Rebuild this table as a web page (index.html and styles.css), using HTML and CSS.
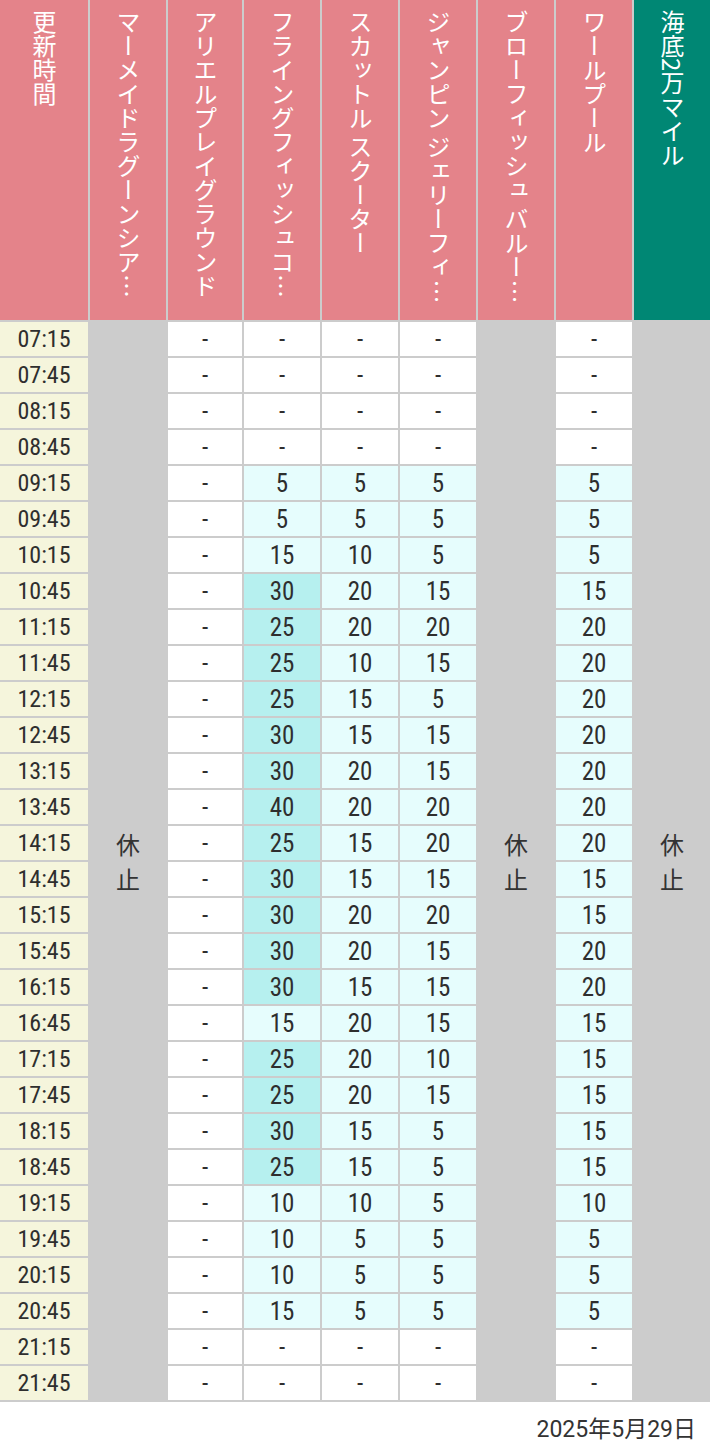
FILE: index.html
```html
<!DOCTYPE html>
<html lang="ja">
<head>
<meta charset="utf-8">
<link rel="stylesheet" href="styles.css">
</head>
<body>
<div class="board" id="board">
  <div class="hd"><span class="vt">更新時間</span></div>
  <div class="hd"><span class="vt">マーメイドラグーンシアター</span></div>
  <div class="hd"><span class="vt">アリエルプレイグラウンド</span></div>
  <div class="hd"><span class="vt">フライングフィッシュコースター</span></div>
  <div class="hd"><span class="vt">スカットル スクーター</span></div>
  <div class="hd"><span class="vt">ジャンピン ジェリーフィッシュ</span></div>
  <div class="hd"><span class="vt">ブローフィッシュ バルーンレース</span></div>
  <div class="hd"><span class="vt">ワールプール</span></div>
  <div class="hd hd-teal"><span class="vt">海底2万マイル</span></div>
  <div class="closed c2">休<br>止</div>
  <div class="closed c7">休<br>止</div>
  <div class="closed c9">休<br>止</div>
</div>
<div class="footer">2025年5月29日</div>
<script src="app.js"></script>
</body>
</html>
```

FILE: styles.css
```css
html, body {
  margin: 0;
  padding: 0;
  background: #ffffff;
}
body {
  width: 710px;
  font-family: "Noto Sans CJK JP", sans-serif;
  color: #333333;
}
.board {
  display: grid;
  grid-template-columns: 88px 76px 74px 76px 76px 76px 76px 76px 76px;
  grid-template-rows: 320px repeat(30, 34px);
  gap: 2px;
  padding-bottom: 2px;
  background: #cccccc;
  width: 710px;
}
.hd {
  background: #e4838a;
  color: #ffffff;
  display: flex;
  justify-content: center;
  padding-top: 10px;
  box-sizing: border-box;
}
.hd-teal {
  background: #008774;
}
.vt {
  writing-mode: vertical-rl;
  font-family: "Noto Sans CJK JP", sans-serif;
  font-size: 24px;
  line-height: 28px;
  height: 300px;
  white-space: nowrap;
  overflow: hidden;
  text-overflow: ellipsis;
}
.closed {
  grid-row: 2 / span 30;
  background: #cccccc;
  display: flex;
  align-items: center;
  justify-content: center;
  text-align: center;
  font-size: 24px;
  line-height: 35px;
  color: #333333;
}
.c2 { grid-column: 2; }
.c7 { grid-column: 7; }
.c9 { grid-column: 9; }
.cell {
  display: flex;
  align-items: center;
  justify-content: center;
  font-family: "Roboto Condensed", "DejaVu Sans Condensed", sans-serif;
  font-size: 25px;
  color: #2e2e2e;
  background: #ffffff;
}
.time {
  background: #f5f5dc;
  font-size: 24px;
}
.wait {
  background: #e6fdfd;
}
.wait-high {
  background: #b6f0ef;
}
.footer {
  height: 50px;
  display: flex;
  align-items: center;
  justify-content: flex-end;
  padding-right: 14px;
  font-family: "Roboto", "Noto Sans CJK JP", sans-serif;
  font-size: 23px;
  color: #333333;
}
```

FILE: app.js
```js
(function () {
  var rows = [
    ["07:15", "-", "-", "-", "-", "-"],
    ["07:45", "-", "-", "-", "-", "-"],
    ["08:15", "-", "-", "-", "-", "-"],
    ["08:45", "-", "-", "-", "-", "-"],
    ["09:15", "-", "5", "5", "5", "5"],
    ["09:45", "-", "5", "5", "5", "5"],
    ["10:15", "-", "15", "10", "5", "5"],
    ["10:45", "-", "30", "20", "15", "15"],
    ["11:15", "-", "25", "20", "20", "20"],
    ["11:45", "-", "25", "10", "15", "20"],
    ["12:15", "-", "25", "15", "5", "20"],
    ["12:45", "-", "30", "15", "15", "20"],
    ["13:15", "-", "30", "20", "15", "20"],
    ["13:45", "-", "40", "20", "20", "20"],
    ["14:15", "-", "25", "15", "20", "20"],
    ["14:45", "-", "30", "15", "15", "15"],
    ["15:15", "-", "30", "20", "20", "15"],
    ["15:45", "-", "30", "20", "15", "20"],
    ["16:15", "-", "30", "15", "15", "20"],
    ["16:45", "-", "15", "20", "15", "15"],
    ["17:15", "-", "25", "20", "10", "15"],
    ["17:45", "-", "25", "20", "15", "15"],
    ["18:15", "-", "30", "15", "5", "15"],
    ["18:45", "-", "25", "15", "5", "15"],
    ["19:15", "-", "10", "10", "5", "10"],
    ["19:45", "-", "10", "5", "5", "5"],
    ["20:15", "-", "10", "5", "5", "5"],
    ["20:45", "-", "15", "5", "5", "5"],
    ["21:15", "-", "-", "-", "-", "-"],
    ["21:45", "-", "-", "-", "-", "-"]
  ];
  var board = document.getElementById("board");
  rows.forEach(function (r) {
    r.forEach(function (v, i) {
      var d = document.createElement("div");
      var cls = "cell";
      if (i === 0) {
        cls += " time";
      } else if (v !== "-") {
        cls += parseInt(v, 10) >= 25 ? " wait-high" : " wait";
      }
      d.className = cls;
      d.textContent = v;
      board.appendChild(d);
    });
  });
})();
```
